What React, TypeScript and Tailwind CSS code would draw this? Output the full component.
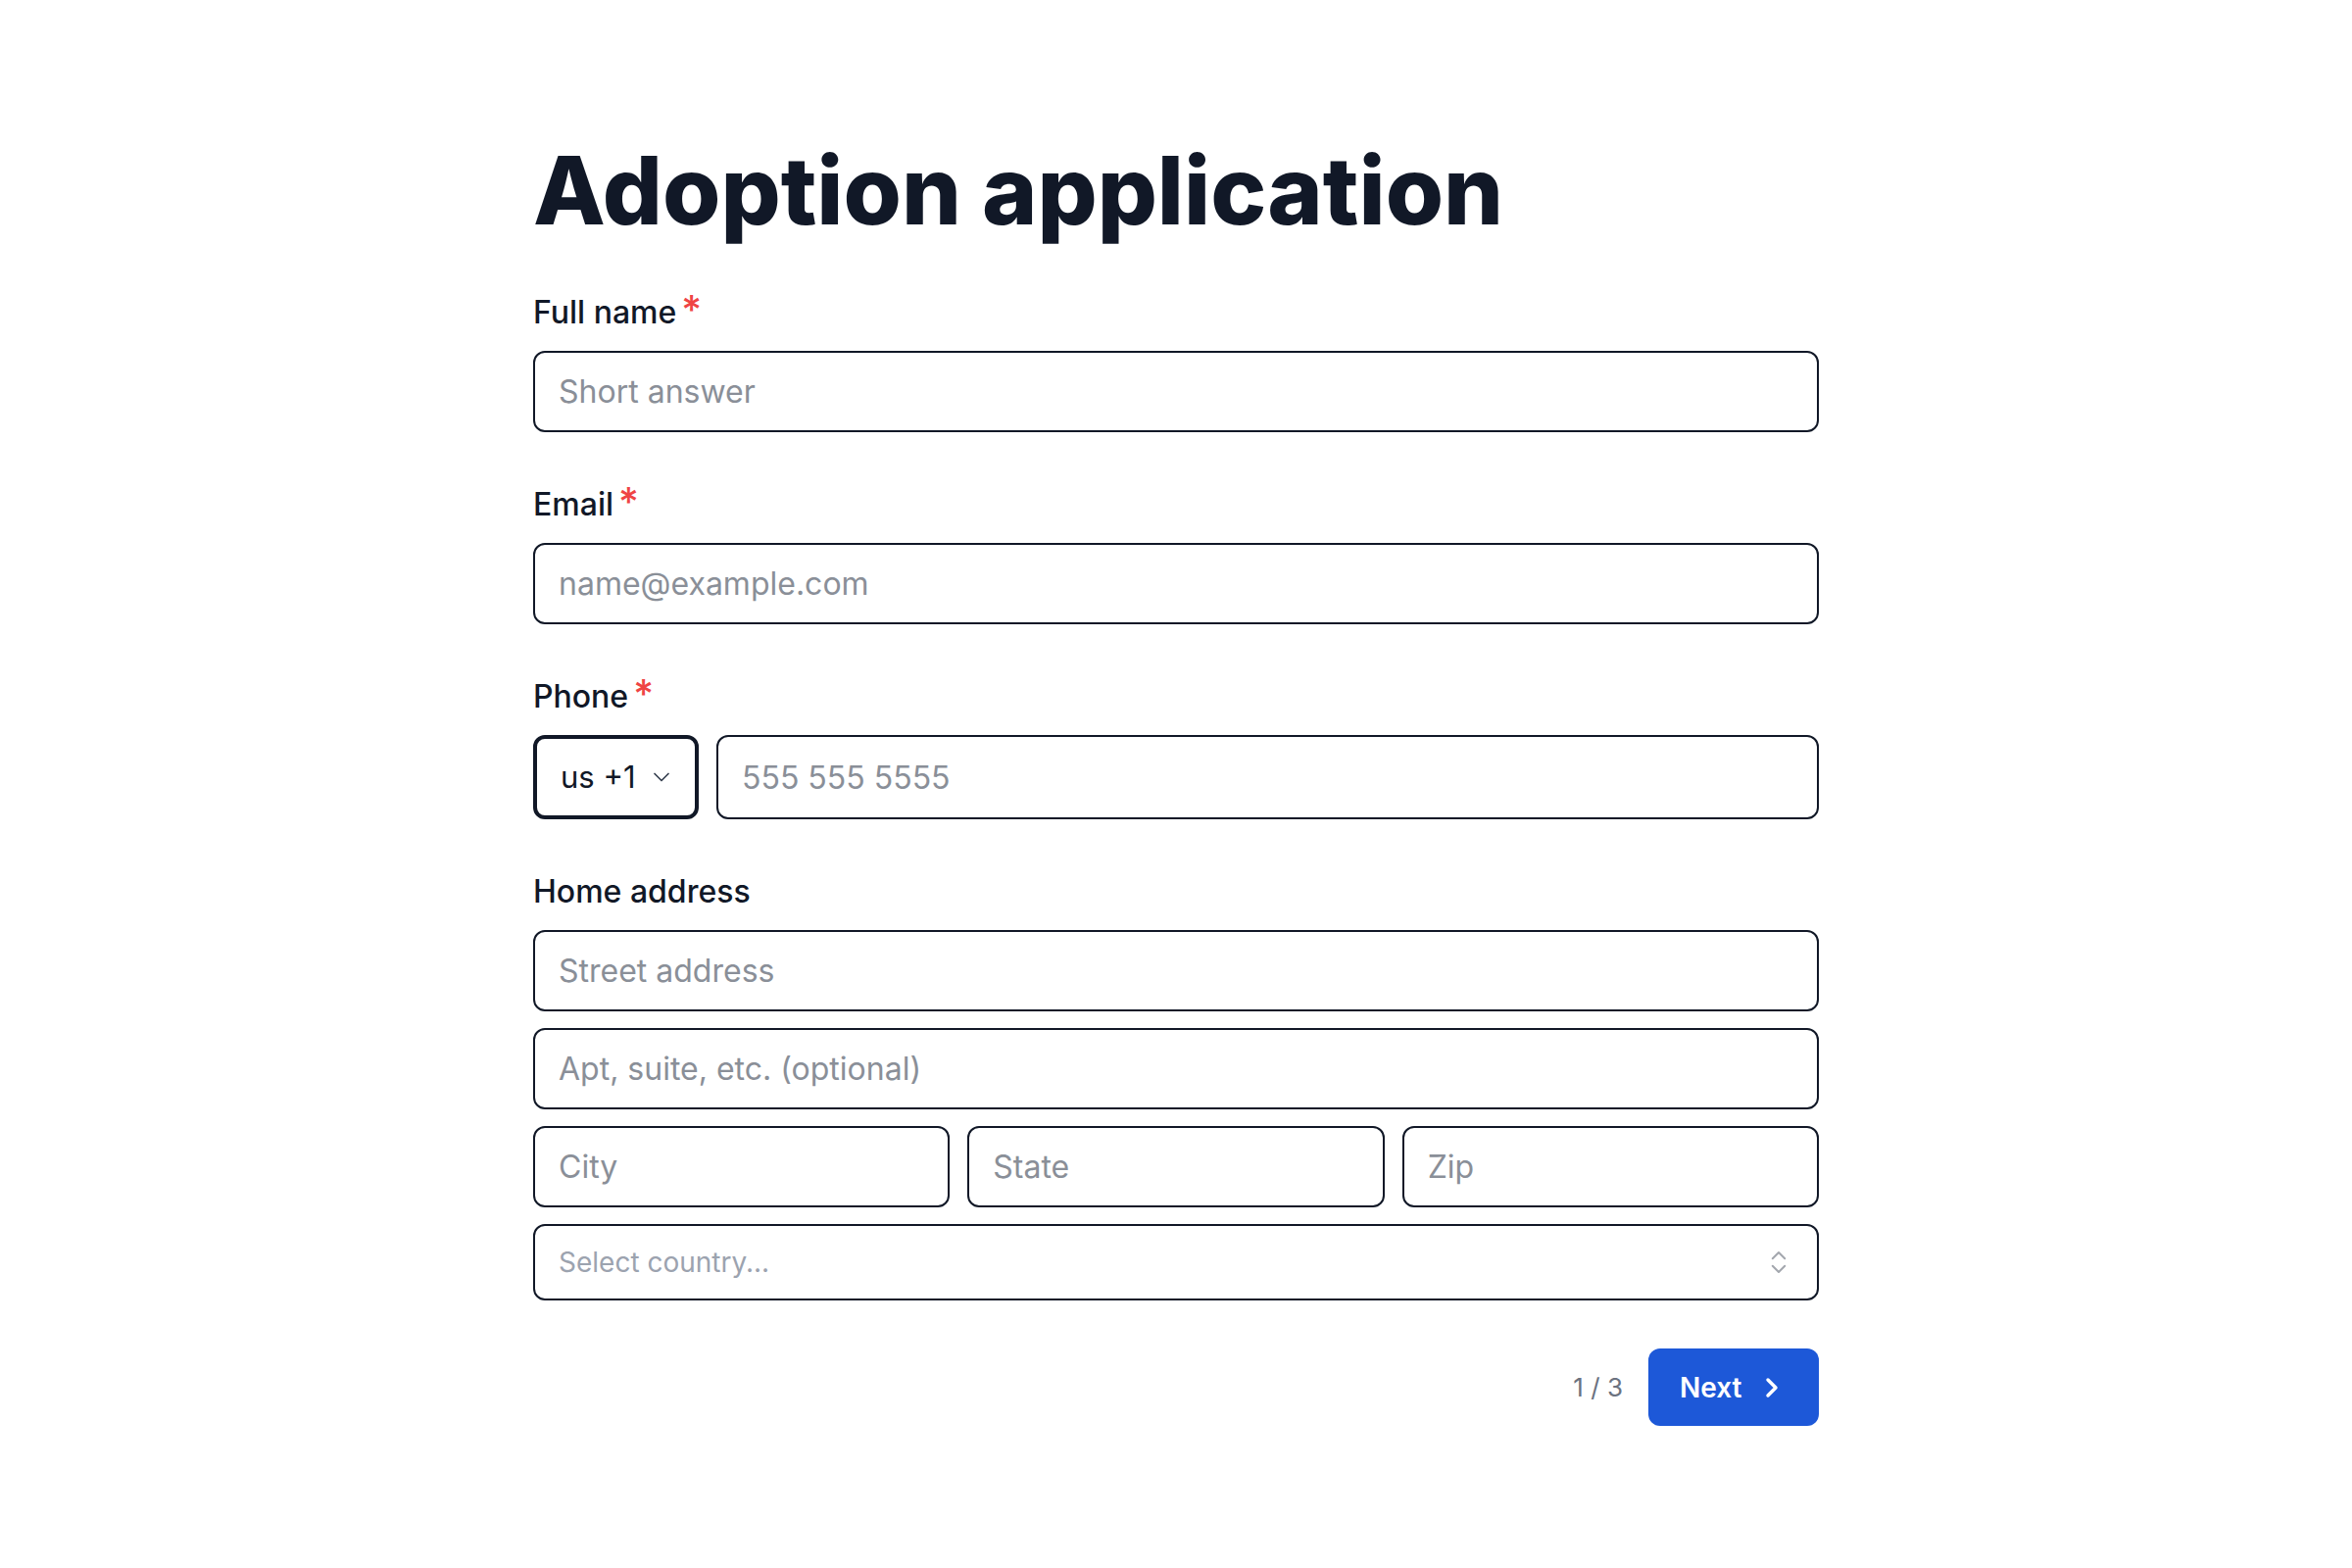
import React from 'react';
import { ChevronDown, ChevronRight, ChevronsUpDown } from 'lucide-react';

const inputClass =
  'h-[83px] w-full rounded-[12px] border-2 border-[#111827] bg-white px-6 text-[32px] text-[#111827] outline-none placeholder:text-[#8a8f98]';

const Label = ({ text, required }: { text: string; required?: boolean }) => (
  <label className="block text-[32px] leading-[36px] font-medium text-[#111827]">
    {text}
    {required && <span className="ml-[5px] text-[40px] leading-[0] text-[#ef4444]">*</span>}
  </label>
);

export default function App() {
  return (
    <div className="min-h-screen bg-white font-['Inter','Noto_Sans',sans-serif]">
      <div className="mx-auto w-[1312px] pt-[146px] pb-24">
        <h1 className="text-[96px] leading-none font-extrabold text-[#111827]">Adoption application</h1>

        <form className="mt-[59px] flex flex-col gap-[56px]" onSubmit={(e) => e.preventDefault()}>
          {/* Full name */}
          <div className="flex flex-col gap-[21px]">
            <Label text="Full name" required />
            <input className={inputClass} placeholder="Short answer" />
          </div>

          {/* Email */}
          <div className="flex flex-col gap-[21px]">
            <Label text="Email" required />
            <input className={inputClass} placeholder="name@example.com" />
          </div>

          {/* Phone */}
          <div className="flex flex-col gap-[21px]">
            <Label text="Phone" required />
            <div className="flex gap-[18px]">
              <button
                type="button"
                className="flex h-[86px] w-[169px] shrink-0 items-center gap-[12px] rounded-[12px] border-4 border-[#111827] bg-white pl-6 text-[31px] text-[#111827]"
              >
                <span>us +1</span>
                <ChevronDown size={28} strokeWidth={1.5} className="text-[#374151]" />
              </button>
              <input className={`${inputClass} h-[86px]`} placeholder="555 555 5555" />
            </div>
          </div>

          {/* Home address */}
          <div className="flex flex-col gap-[21px]">
            <Label text="Home address" />
            <div className="flex flex-col gap-[17px]">
              <input className={inputClass} placeholder="Street address" />
              <input className={inputClass} placeholder="Apt, suite, etc. (optional)" />
              <div className="grid grid-cols-3 gap-[18px]">
                <input className={inputClass} placeholder="City" />
                <input className={inputClass} placeholder="State" />
                <input className={inputClass} placeholder="Zip" />
              </div>
              <button
                type="button"
                className="flex h-[78px] w-full items-center justify-between rounded-[12px] border-2 border-[#111827] bg-white pr-[24px] pl-6 text-[28px] text-[#9ca3af]"
              >
                <span>Select country...</span>
                <ChevronsUpDown size={30} strokeWidth={1.6} className="text-[#a3a7ae]" />
              </button>
            </div>
          </div>
        </form>

        {/* Footer */}
        <div className="mt-[49px] flex items-center justify-end gap-[26px]">
          <span className="text-[26px] text-[#6b7280]">1 / 3</span>
          <button
            type="button"
            className="flex h-[79px] w-[174px] items-center rounded-[12px] bg-[#1d58d8] pl-8 text-[28px] font-semibold text-white"
          >
            Next
            <ChevronRight size={32} strokeWidth={2.6} className="ml-[14px]" />
          </button>
        </div>
      </div>
    </div>
  );
}
